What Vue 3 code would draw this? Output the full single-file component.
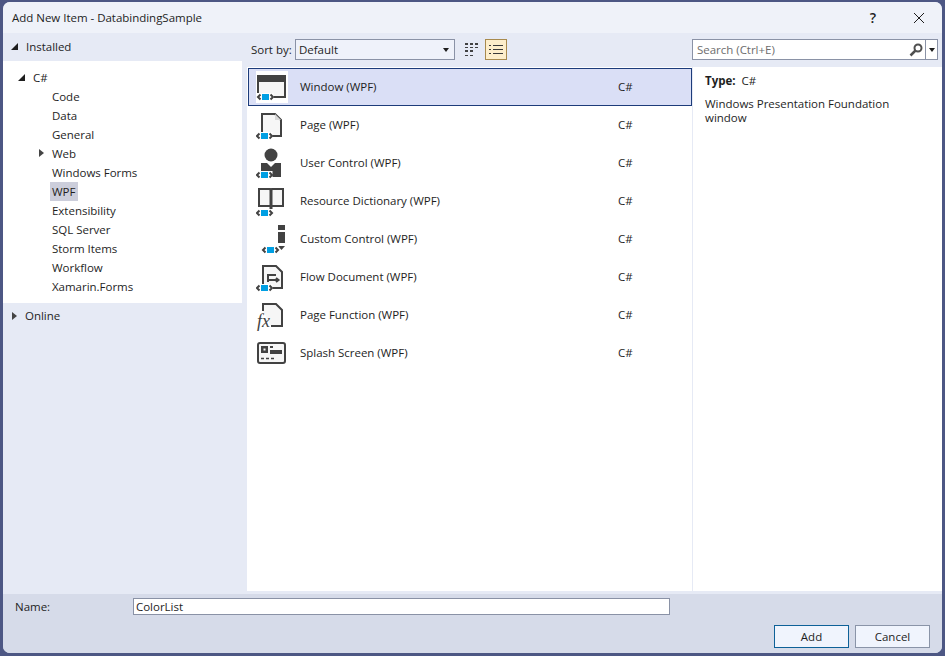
<template>
  <div class="desktop">
    <div class="dialog">
      <div class="title-bar">
        <span>Add New Item - DatabindingSample</span>
        <div class="title-buttons">
          <span class="help">?</span>
          <svg class="close" width="12" height="12" viewBox="0 0 12 12">
            <path d="M1 1 L11 11 M11 1 L1 11" stroke="#1e1e1e" stroke-width="1" fill="none" />
          </svg>
        </div>
      </div>

      <div class="main">
        <!-- Left tree -->
        <div class="left-pane">
          <div class="section-row">
            <span class="arrow-open"></span>
            <span>Installed</span>
          </div>
          <div class="tree">
            <div class="tree-root">
              <span class="arrow-open"></span>
              <span>C#</span>
            </div>
            <div
              v-for="node in treeNodes"
              :key="node.label"
              class="tree-node"
            >
              <span v-if="node.children" class="arrow-closed"></span>
              <span class="tree-label" :class="{ selected: node.selected }">{{ node.label }}</span>
            </div>
          </div>
          <div class="section-row online">
            <span class="arrow-closed"></span>
            <span>Online</span>
          </div>
        </div>

        <!-- Template list -->
        <div class="center-pane">
          <div class="toolbar">
            <span class="sort-label">Sort by:</span>
            <div class="combo">
              <span>Default</span>
              <span class="combo-caret"></span>
            </div>
            <button class="view-btn grid">
              <svg width="14" height="14" viewBox="0 0 14 14" fill="#424242">
                <rect x="0" y="0" width="3" height="2" /><rect x="5" y="0" width="3" height="2" /><rect x="10" y="0" width="3" height="2" />
                <rect x="0" y="4" width="3" height="1" /><rect x="5" y="4" width="3" height="1" /><rect x="10" y="4" width="3" height="1" />
                <rect x="0" y="7" width="3" height="2" /><rect x="5" y="7" width="3" height="2" />
                <rect x="0" y="12" width="3" height="1" /><rect x="5" y="12" width="3" height="1" />
              </svg>
            </button>
            <button class="view-btn active">
              <svg width="14" height="12" viewBox="0 0 14 12" fill="#3a3a3a">
                <rect x="0" y="1" width="2" height="1" /><rect x="4" y="1" width="10" height="1" />
                <rect x="0" y="5" width="2" height="1" /><rect x="4" y="5" width="10" height="1" />
                <rect x="0" y="9" width="2" height="1" /><rect x="4" y="9" width="10" height="1" />
              </svg>
            </button>
          </div>
          <div class="item-list">
            <div
              v-for="(item, i) in items"
              :key="item.name"
              class="item-row"
              :class="{ selected: i === 0 }"
            >
              <span class="item-icon" :class="{ halo: i === 0 }">
                <svg width="32" height="32" viewBox="0 0 32 32">
                  <g v-if="item.icon === 'window'">
                    <path d="M1.500 26.500 V4.500 H29.500 V26.500 Z" fill="#f6f6f6" />
                    <rect x="1" y="4" width="29" height="7" fill="#424242" />
                    <path d="M2 10 V22 M29 10 V26 H18" stroke="#424242" stroke-width="2" fill="none" />
                  </g>
                  <g v-else-if="item.icon === 'page'">
                    <path d="M6 25 V5 H19 L25 11 V27 H16" fill="#f6f6f6" stroke="#424242" stroke-width="2" />
                    <path d="M19 5 L25 11 H19 Z" fill="#d8d8d8" />
                  </g>
                  <g v-else-if="item.icon === 'user'">
                    <circle cx="15" cy="8" r="6.500" fill="#424242" />
                    <path d="M5 16 H11 L15 20 L19 16 H25 V30 H5 Z" fill="#424242" />
                  </g>
                  <g v-else-if="item.icon === 'book'">
                    <path d="M3 4 H14 L15 5 L16 4 H27 V21 H3 Z" fill="#f6f6f6" stroke="#424242" stroke-width="2" />
                    <path d="M15 5 V24" stroke="#424242" stroke-width="3" />
                  </g>
                  <g v-else-if="item.icon === 'custom'">
                    <rect x="22" y="2" width="7" height="5" fill="#424242" />
                    <rect x="22" y="9" width="7" height="11" fill="#424242" />
                    <path d="M22 23 H29 L25.500 27 Z" fill="#424242" />
                  </g>
                  <g v-else-if="item.icon === 'flow'">
                    <path d="M7 25 V5 H20 L26 11 V27 H17" fill="#f6f6f6" stroke="#424242" stroke-width="2" />
                    <path d="M12 21 V14 H20 M12 19 H22 M20 17 L22.500 19 L20 21" stroke="#424242" stroke-width="2" fill="none" />
                  </g>
                  <g v-else-if="item.icon === 'func'">
                    <path d="M7 12 V5 H20 L26 11 V27 H15" fill="#f6f6f6" stroke="#424242" stroke-width="2" />
                    <text x="1" y="28" class="fx">fx</text>
                  </g>
                  <g v-else>
                    <rect x="2" y="6" width="27" height="20" rx="2" fill="#f6f6f6" stroke="#424242" stroke-width="2" />
                    <rect x="5" y="9" width="7" height="7" fill="#424242" />
                    <rect x="7.500" y="11.500" width="2" height="2" fill="#f6f6f6" />
                    <rect x="14" y="9" width="3" height="2" fill="#424242" />
                    <rect x="14" y="13" width="12" height="4" fill="#424242" />
                    <path d="M5 21.500 H8 M10 21.500 H13 M15 21.500 H18" stroke="#424242" stroke-width="1.500" />
                  </g>
                  <g v-if="item.tagX !== undefined" :transform="`translate(${item.tagX} ${item.tagY})`">
                    <rect x="-0.500" y="-1" width="17" height="8" fill="#fff" />
                    <path d="M3.500 0.500 L1 3 L3.500 5.500 M13.500 0.500 L16 3 L13.500 5.500" stroke="#424242" stroke-width="2" fill="none" />
                    <rect x="5" y="0" width="7" height="6" fill="#009fe3" />
                  </g>
                </svg>
              </span>
              <span class="item-name">{{ item.name }}</span>
              <span class="item-lang">C#</span>
            </div>
          </div>
        </div>

        <!-- Right details -->
        <div class="right-pane">
          <div class="search-wrap">
            <div class="search">
              <span class="search-text">Search (Ctrl+E)</span>
              <svg class="search-icon" width="14" height="14" viewBox="0 0 14 14">
                <circle cx="9" cy="5" r="3.500" fill="none" stroke="#505050" stroke-width="2" />
                <path d="M6.500 7.500 L1.500 12.500" stroke="#505050" stroke-width="2.500" />
              </svg>
              <span class="search-drop"><span class="combo-caret"></span></span>
            </div>
          </div>
          <div class="details">
            <div class="type-line"><b>Type:</b><span>C#</span></div>
            <p>Windows Presentation Foundation window</p>
          </div>
        </div>
      </div>

      <div class="footer">
        <div class="name-row">
          <label>Name:</label>
          <div class="name-input">ColorList</div>
        </div>
        <div class="button-row">
          <button class="btn default">Add</button>
          <button class="btn">Cancel</button>
        </div>
      </div>
    </div>
  </div>
</template>

<script setup>
const treeNodes = [
  { label: 'Code' },
  { label: 'Data' },
  { label: 'General' },
  { label: 'Web', children: true },
  { label: 'Windows Forms' },
  { label: 'WPF', selected: true },
  { label: 'Extensibility' },
  { label: 'SQL Server' },
  { label: 'Storm Items' },
  { label: 'Workflow' },
  { label: 'Xamarin.Forms' }
]

const items = [
  { name: 'Window (WPF)', icon: 'window', tagX: 1, tagY: 23 },
  { name: 'Page (WPF)', icon: 'page', tagX: 0, tagY: 24 },
  { name: 'User Control (WPF)', icon: 'user', tagX: 0, tagY: 25 },
  { name: 'Resource Dictionary (WPF)', icon: 'book', tagX: 0, tagY: 25 },
  { name: 'Custom Control (WPF)', icon: 'custom', tagX: 6, tagY: 24 },
  { name: 'Flow Document (WPF)', icon: 'flow', tagX: 0, tagY: 24 },
  { name: 'Page Function (WPF)', icon: 'func' },
  { name: 'Splash Screen (WPF)', icon: 'splash' }
]
</script>

<style>
body { margin: 0; }
</style>

<style scoped>
.desktop { width: 945px; height: 656px; box-sizing: border-box; padding: 2px 3px 3px 3px; background: #4d5784; font-family: "Open Sans", "Noto Sans", sans-serif; font-size: 11.500px; letter-spacing: -0.02px; color: #1e1e1e; overflow: hidden; }
.dialog { height: 100%; display: flex; flex-direction: column; border-radius: 7px; overflow: hidden; background: #e6eaf5; }
.title-bar { height: 31px; flex: none; display: flex; justify-content: space-between; align-items: center; padding-left: 9px; background: #eff2f9; }
.title-buttons { display: flex; align-items: center; }
.help { width: 12px; text-align: center; margin-right: 34px; font-size: 14px; font-weight: 600; }
.close { margin-right: 17px; }

.main { flex: 1; display: flex; min-height: 0; }
.left-pane { width: 239px; flex: none; }
.section-row { height: 28px; display: flex; align-items: center; gap: 8px; padding-left: 8px; box-sizing: border-box; padding-bottom: 1px; }
.online { gap: 8px; padding-left: 9px; padding-bottom: 3px; }
.arrow-open { width: 0; height: 0; border-left: 7px solid transparent; border-bottom: 7px solid #1e1e1e; flex: none; }
.arrow-closed { width: 0; height: 0; border-left: 5px solid #444; border-top: 4.500px solid transparent; border-bottom: 4.500px solid transparent; flex: none; }
.tree { height: 242px; box-sizing: border-box; padding-top: 6px; background: #fff; }
.tree-root { height: 20px; display: flex; align-items: center; gap: 8px; padding-left: 15px; }
.tree-node { height: 19px; display: flex; align-items: center; padding-left: 47px; position: relative; }
.tree-node .arrow-closed { position: absolute; left: 36px; top: 5px; }
.tree-label { padding: 0 3px 0 2px; line-height: 19px; }
.tree-label.selected { background: #cccedb; }

.center-pane { width: 445px; margin-left: 5px; flex: none; display: flex; flex-direction: column; }
.toolbar { height: 34px; flex: none; display: flex; align-items: center; padding-bottom: 1px; box-sizing: border-box; }
.sort-label { margin-left: 4px; width: 44px; }
.combo { width: 160px; height: 21px; box-sizing: border-box; border: 1px solid #8a92a6; background: #eff2fa; display: flex; align-items: center; justify-content: space-between; padding: 0 5px 0 3px; }
.combo-caret { width: 0; height: 0; border-left: 3.500px solid transparent; border-right: 3.500px solid transparent; border-top: 4px solid #1e1e1e; }
.view-btn { width: 22px; height: 21px; padding: 0; border: 1px solid transparent; background: none; display: flex; align-items: center; justify-content: center; }
.view-btn.grid { width: 18px; margin-left: 8px; margin-right: 4px; }
.view-btn.active { background: #fdeecb; border-color: #a88a4e; }
.item-list { flex: 1; background: #fff; padding-left: 1px; padding-top: 1px; margin-bottom: 3px; }
.item-row { height: 38px; box-sizing: border-box; display: flex; align-items: center; padding-left: 7px; border: 1px solid transparent; border-right: 0; }
.item-row.selected { background: #dadff6; border: 1px solid #1d3c7a; }
.item-icon { width: 32px; height: 32px; flex: none; display: block; }
.item-icon svg { display: block; }
.item-icon.halo { background: #fff; }
.fx { font-family: "Liberation Serif", serif; font-style: italic; font-size: 18px; fill: #424242; }
.item-name { width: 318px; margin-left: 12px; padding-bottom: 1px; }
.item-lang { padding-bottom: 1px; }

.right-pane { flex: 1; min-width: 0; display: flex; flex-direction: column; }
.search-wrap { height: 34px; flex: none; display: flex; align-items: flex-start; padding-top: 6px; box-sizing: border-box; }
.search { width: 246px; height: 21px; box-sizing: border-box; border: 1px solid #8a92a6; background: #fff; display: flex; align-items: center; }
.search-text { flex: 1; padding-left: 4px; color: #6d6d6d; }
.search-icon { margin-right: 2px; }
.search-drop { width: 11px; height: 100%; border-left: 1px solid #8a92a6; display: flex; align-items: center; justify-content: center; }
.details { flex: 1; margin-bottom: 3px; background: #fff; border-left: 1px solid #e6eaf5; padding: 6px 12px; }
.type-line { display: flex; gap: 6px; line-height: 16px; }
.details p { margin: 8px 0 0; line-height: 14px; width: 200px; }

.footer { height: 59px; flex: none; background: #d6dbe9; box-sizing: border-box; padding-top: 4px; }
.name-row { display: flex; align-items: center; height: 17px; }
.name-row label { width: 118px; margin-left: 12px; }
.name-input { width: 537px; height: 17px; box-sizing: border-box; border: 1px solid #8a92a6; background: #fff; padding-left: 2px; line-height: 15px; }
.button-row { display: flex; justify-content: flex-end; gap: 6px; margin-top: 10px; padding-right: 12px; }
.btn { width: 75px; height: 23px; border: 1px solid #8a94a8; background: #f0f4fd; font: inherit; color: #1e1e1e; padding: 0; }
.btn.default { border-color: #0e6198; }
</style>
